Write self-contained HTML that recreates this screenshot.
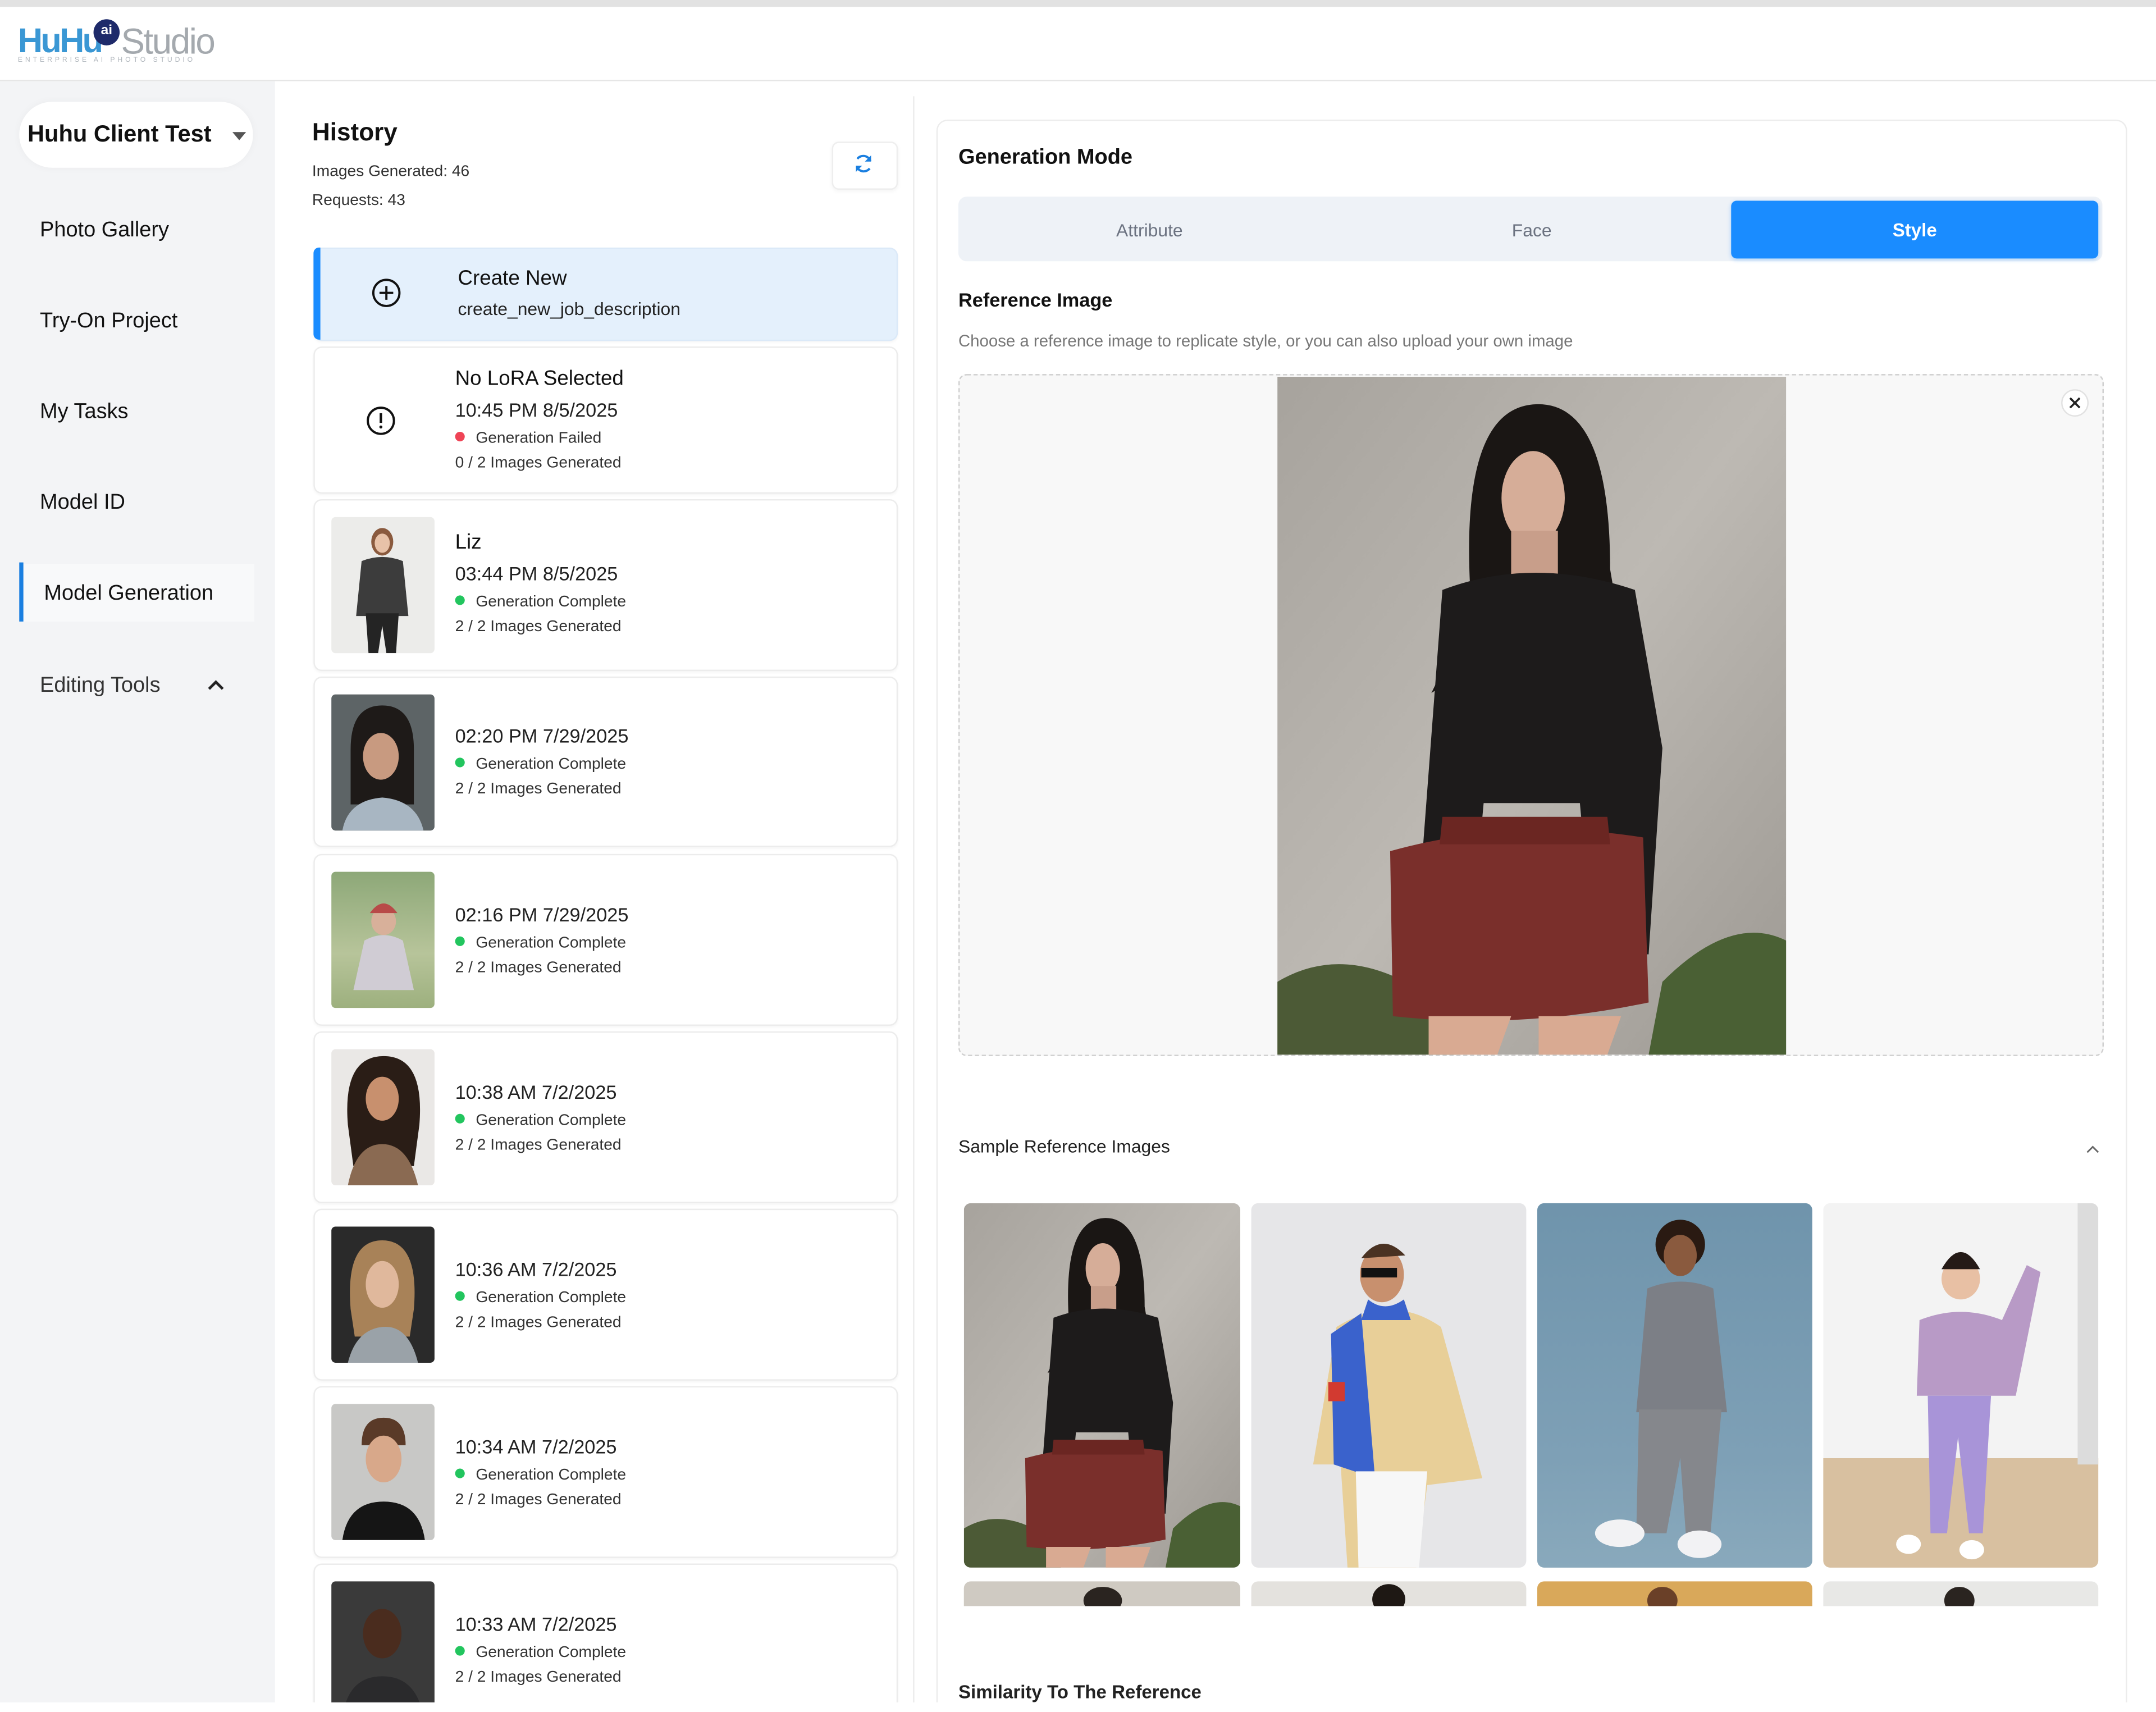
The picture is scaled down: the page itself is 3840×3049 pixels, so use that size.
<!DOCTYPE html>
<html><head><meta charset="utf-8"><style>
html,body{margin:0;padding:0;}
body{width:3840px;height:3048px;overflow:hidden;background:#fff;font-family:"Liberation Sans",Arial,sans-serif;}
#w{position:absolute;left:0;top:0;width:1568px;height:1245px;transform:scale(2.449);transform-origin:0 0;background:#fff;overflow:hidden;}
.a{position:absolute;}
.nav{position:absolute;left:29px;font-size:15.5px;color:#111;}
.card{position:absolute;left:228px;width:423px;background:#fff;border:1px solid #ececec;border-radius:6px;box-shadow:0 1px 2px rgba(0,0,0,.04);}
.th{position:absolute;left:12px;top:12px;width:75px;height:99px;border-radius:3px;overflow:hidden;}
.t1{position:absolute;left:102px;font-size:15px;color:#111;}
.t2{position:absolute;left:102px;font-size:14px;color:#222;}
.st{position:absolute;left:102px;font-size:11.5px;color:#333;}
.st i{display:inline-block;width:7px;height:7px;border-radius:50%;background:#22c55e;margin-right:8px;vertical-align:1px;}
.ct{position:absolute;left:102px;font-size:11.5px;color:#333;}
.g{position:absolute;top:875px;width:200px;height:265px;border-radius:5px;overflow:hidden;}
.g2{position:absolute;top:1150px;width:200px;height:18px;border-radius:5px 5px 0 0;overflow:hidden;}
</style></head><body><div id="w">
<!-- header -->
<div class="a" style="left:0;top:0;width:1568px;height:5px;background:#e2e2e2"></div>
<div class="a" style="left:0;top:58px;width:1568px;height:1px;background:#e6e6e6"></div>
<div class="a" style="left:13px;top:16px;font-size:25px;letter-spacing:-1.5px;color:#3a97d4;font-weight:bold;">HuHu</div>
<div class="a" style="left:68px;top:14px;width:19px;height:19px;border-radius:50%;background:#1e2a6a;color:#fff;font-size:10px;text-align:center;line-height:17px;font-weight:bold">ai</div>
<div class="a" style="left:88px;top:15px;font-size:26px;letter-spacing:-1px;color:#a4a9ae;">Studio</div>
<div class="a" style="left:13px;top:41px;font-size:5px;letter-spacing:2px;color:#b0b6bc;">ENTERPRISE AI PHOTO STUDIO</div>
<!-- sidebar -->
<div class="a" style="left:0;top:59px;width:200px;height:1186px;background:#f3f4f6"></div>
<div class="a" style="left:14px;top:74px;width:170px;height:48px;border-radius:24px;background:#fff;box-shadow:0 0 6px rgba(0,0,0,.04)"></div>
<div class="a" style="left:20px;top:88px;font-size:17px;font-weight:bold;color:#111">Huhu Client Test</div>
<svg class="a" style="left:169px;top:96px" width="10" height="6"><path d="M0 0h10L5 6z" fill="#555"/></svg>
<div class="nav" style="top:159px">Photo Gallery</div>
<div class="nav" style="top:225px">Try-On Project</div>
<div class="nav" style="top:291px">My Tasks</div>
<div class="nav" style="top:357px">Model ID</div>
<div class="a" style="left:17px;top:410px;width:168px;height:42px;background:#f8f9fa"></div>
<div class="a" style="left:14px;top:409px;width:3px;height:43px;background:#1a7fe0"></div>
<div class="nav" style="top:423px;left:32px">Model Generation</div>
<div class="nav" style="top:490px;color:#333">Editing Tools</div>
<svg class="a" style="left:151px;top:494px" width="12" height="8"><path d="M1 7L6 2L11 7" stroke="#222" stroke-width="2" fill="none"/></svg>
<!-- middle -->
<div class="a" style="left:664px;top:70px;width:1px;height:1175px;background:#ececec"></div>
<div class="a" style="left:227px;top:86px;font-size:18px;font-weight:bold;color:#111">History</div>
<div class="a" style="left:227px;top:119px;font-size:11.5px;color:#333">Images Generated: 46</div>
<div class="a" style="left:227px;top:140px;font-size:11.5px;color:#333">Requests: 43</div>
<div class="a" style="left:605px;top:103px;width:46px;height:33px;border:1px solid #eee;border-radius:5px;background:#fff;box-shadow:0 1px 3px rgba(0,0,0,.05)"></div>
<svg class="a" style="left:620px;top:111px" width="16" height="16" viewBox="0 0 16 16"><path d="M13 6A5.5 5.5 0 0 0 3.5 4.5M3 10a5.5 5.5 0 0 0 9.5 1.5" stroke="#1a7fe0" stroke-width="1.6" fill="none"/><path d="M13.5 2v4.5H9z" fill="#1a7fe0"/><path d="M2.5 14V9.5H7z" fill="#1a7fe0"/></svg>

<div class="card" style="top:180px;height:66px;background:#e4f0fc;border-color:#dbe9f8"></div>
<div class="a" style="left:228px;top:180px;width:5px;height:67px;background:#1a8cff;border-radius:4px 0 0 4px"></div>
<svg class="a" style="left:270px;top:202px" width="22" height="22"><circle cx="11" cy="11" r="9.5" stroke="#111" stroke-width="1.6" fill="none"/><path d="M11 6v10M6 11h10" stroke="#111" stroke-width="1.6"/></svg>
<div class="a" style="left:333px;top:194px;font-size:15px;color:#111">Create New</div>
<div class="a" style="left:333px;top:217px;font-size:13px;color:#222">create_new_job_description</div>

<div class="card" style="top:252px;height:105px">
<svg class="a" style="left:37px;top:42px" width="22" height="22"><circle cx="11" cy="11" r="9.5" stroke="#111" stroke-width="1.6" fill="none"/><path d="M11 5.5v7" stroke="#111" stroke-width="1.8"/><circle cx="11" cy="15.5" r="1.1" fill="#111"/></svg>
<div class="t1" style="top:14px">No LoRA Selected</div>
<div class="t2" style="top:37px">10:45 PM 8/5/2025</div>
<div class="st" style="top:60px"><i style="background:#ef4456"></i>Generation Failed</div>
<div class="ct" style="top:78px">0 / 2 Images Generated</div>
</div>

<div class="card" style="top:363px;height:123px">
<div class="th" style="background:#ececea"><svg width="75" height="99" viewBox="0 0 75 99"><ellipse cx="37" cy="18" rx="8" ry="10" fill="#8a5a3e"/><ellipse cx="37" cy="19" rx="5.5" ry="7" fill="#e8c2a8"/><path d="M22 32q15-6 30 0l4 40h-38z" fill="#3c3c3c"/><path d="M25 70h24l-2 29h-7l-3-20-3 20h-7z" fill="#242424"/></svg></div>
<div class="t1" style="top:22px">Liz</div>
<div class="t2" style="top:45px">03:44 PM 8/5/2025</div>
<div class="st" style="top:68px"><i></i>Generation Complete</div>
<div class="ct" style="top:86px">2 / 2 Images Generated</div>
</div>

<div class="card" style="top:492px;height:122px">
<div class="th" style="background:#5d6466"><svg width="75" height="99" viewBox="0 0 75 99"><path d="M14 40q0-32 23-32t23 32v40h-46z" fill="#1e1a18"/><ellipse cx="36" cy="45" rx="13" ry="17" fill="#c89a80"/><path d="M8 99q4-22 29-24q25 2 30 24z" fill="#a8b6c2"/></svg></div>
<div class="t2" style="top:34px">02:20 PM 7/29/2025</div>
<div class="st" style="top:57px"><i></i>Generation Complete</div>
<div class="ct" style="top:75px">2 / 2 Images Generated</div>
</div>

<div class="card" style="top:621px;height:123px">
<div class="th" style="background:linear-gradient(#8da878,#b7c49a 60%,#9db07e)"><svg width="75" height="99" viewBox="0 0 75 99"><ellipse cx="38" cy="36" rx="9" ry="10" fill="#d8b09a"/><path d="M28 30q10-14 20 0" fill="#b84a48"/><path d="M24 50q14-8 28 0l8 36h-44z" fill="#d0ccd4"/></svg></div>
<div class="t2" style="top:35px">02:16 PM 7/29/2025</div>
<div class="st" style="top:58px"><i></i>Generation Complete</div>
<div class="ct" style="top:76px">2 / 2 Images Generated</div>
</div>

<div class="card" style="top:750px;height:123px">
<div class="th" style="background:#eae8e6"><svg width="75" height="99" viewBox="0 0 75 99"><path d="M12 55q-4-50 26-50t26 50l-4 30h-44z" fill="#2a1d16"/><ellipse cx="37" cy="36" rx="12" ry="16" fill="#c8906e"/><path d="M12 99q6-30 25-30t26 30z" fill="#8a6a52"/></svg></div>
<div class="t2" style="top:35px">10:38 AM 7/2/2025</div>
<div class="st" style="top:58px"><i></i>Generation Complete</div>
<div class="ct" style="top:76px">2 / 2 Images Generated</div>
</div>

<div class="card" style="top:879px;height:123px">
<div class="th" style="background:#2a2a2a"><svg width="75" height="99" viewBox="0 0 75 99"><path d="M14 60q-4-50 23-50t23 50l-3 20h-40z" fill="#a88258"/><ellipse cx="37" cy="42" rx="12" ry="17" fill="#e0b89c"/><path d="M12 99q6-24 25-26t26 26z" fill="#9aa2a8"/></svg></div>
<div class="t2" style="top:35px">10:36 AM 7/2/2025</div>
<div class="st" style="top:58px"><i></i>Generation Complete</div>
<div class="ct" style="top:76px">2 / 2 Images Generated</div>
</div>

<div class="card" style="top:1008px;height:123px">
<div class="th" style="background:#c8c8c6"><svg width="75" height="99" viewBox="0 0 75 99"><path d="M22 30q0-20 16-20t16 20z" fill="#5a3a28"/><ellipse cx="38" cy="40" rx="13" ry="17" fill="#d8a88a"/><path d="M8 99q4-28 30-28t30 28z" fill="#151515"/></svg></div>
<div class="t2" style="top:35px">10:34 AM 7/2/2025</div>
<div class="st" style="top:58px"><i></i>Generation Complete</div>
<div class="ct" style="top:76px">2 / 2 Images Generated</div>
</div>

<div class="card" style="top:1137px;height:120px">
<div class="th" style="background:#3a3a3a"><svg width="75" height="99" viewBox="0 0 75 99"><ellipse cx="37" cy="38" rx="14" ry="18" fill="#4a2c1e"/><path d="M8 99q4-30 29-30t30 30z" fill="#2a2a2c"/></svg></div>
<div class="t2" style="top:35px">10:33 AM 7/2/2025</div>
<div class="st" style="top:58px"><i></i>Generation Complete</div>
<div class="ct" style="top:76px">2 / 2 Images Generated</div>
</div>

<!-- right panel -->
<div class="a" style="left:681px;top:87px;width:864px;height:1170px;border:1px solid #ececec;border-radius:8px;background:#fff"></div>
<div class="a" style="left:697px;top:106px;font-size:15.5px;font-weight:bold;color:#111">Generation Mode</div>
<div class="a" style="left:697px;top:143px;width:832px;height:47px;background:#eef2f7;border-radius:6px"></div>
<div class="a" style="left:1259px;top:146px;width:267px;height:42px;background:#1a8cff;border-radius:4px;box-shadow:0 1px 3px rgba(26,140,255,.3)"></div>
<div class="a" style="left:697px;top:160px;width:278px;text-align:center;font-size:13px;color:#6b7280">Attribute</div>
<div class="a" style="left:975px;top:160px;width:278px;text-align:center;font-size:13px;color:#6b7280">Face</div>
<div class="a" style="left:1259px;top:160px;width:267px;text-align:center;font-size:13.5px;color:#fff;font-weight:bold">Style</div>
<div class="a" style="left:697px;top:210px;font-size:14px;font-weight:bold;color:#111">Reference Image</div>
<div class="a" style="left:697px;top:241px;font-size:12px;color:#777">Choose a reference image to replicate style, or you can also upload your own image</div>
<div class="a" style="left:697px;top:272px;width:831px;height:494px;border:1.5px dashed #cfcfcf;border-radius:6px;background:#f8f8f8"></div>

<svg class="a" style="left:929px;top:274px" width="370" height="493" viewBox="0 0 370 493" preserveAspectRatio="none">
<defs><linearGradient id="wall" x1="0" y1="0" x2="1" y2="1"><stop offset="0" stop-color="#a7a39d"/><stop offset=".5" stop-color="#bdb9b3"/><stop offset="1" stop-color="#9d9993"/></linearGradient>
<g id="wm">
<path d="M0 440q50-30 110 10l20 43H0z" fill="#4c5a36"/>
<path d="M280 440q50-50 90-30v83H270z" fill="#4a6034"/>
<path d="M140 150q-6-128 48-130t54 120q10 60 20 90l-40 -20-80 0-30 20q20-40 28-80z" fill="#1a1614"/>
<ellipse cx="186" cy="88" rx="23" ry="34" fill="#d6ad98"/>
<path d="M170 112h34v32h-34z" fill="#c89e8a"/>
<path d="M120 155q66-25 140 0l20 115 -10 150-40 0-10-110h-70l-10 110-40 0z" fill="#1d1b1b"/>
<path d="M82 345q90-25 184-10l4 120q-95 20-186 10z" fill="#7a2f2b"/>
<path d="M110 465h60l-10 28h-50zM190 465h60l-10 28h-50z" fill="#d9aa92"/>
<path d="M120 320h120l2 20h-124z" fill="#6b2622"/>
</g></defs>
<rect width="370" height="493" fill="url(#wall)"/>
<use href="#wm"/>
</svg>

<svg class="a" style="left:1499px;top:283px" width="20" height="20"><circle cx="10" cy="10" r="9.5" fill="#fff" stroke="#e2e2e2"/><path d="M6.5 6.5l7 7M13.5 6.5l-7 7" stroke="#222" stroke-width="1.5"/></svg>

<div class="a" style="left:697px;top:826px;font-size:13px;color:#222">Sample Reference Images</div>
<svg class="a" style="left:1517px;top:832px" width="10" height="7"><path d="M1 6L5 2L9 6" stroke="#666" stroke-width="1.2" fill="none"/></svg>

<div class="g" style="left:701px;width:201px">
<svg width="201" height="265" viewBox="0 0 370 493" preserveAspectRatio="none">
<rect width="370" height="493" fill="url(#wall)"/>
<use href="#wm"/>
</svg></div>
<div class="g" style="left:910px;background:#e6e6e8">
<svg width="200" height="265" viewBox="0 0 200 265"><ellipse cx="95" cy="52" rx="16" ry="20" fill="#c8906e"/><path d="M80 40q15-20 32-2" fill="#4a3222"/><rect x="80" y="47" width="26" height="7" fill="#111"/><path d="M62 90q40-25 76 0l30 110-40 5-8 60h-50l-5-75-20 0z" fill="#e8cf98"/><path d="M58 95l22-15 10 120-30-10z" fill="#3a62cc"/><path d="M56 130h12v14h-12z" fill="#d23a30"/><path d="M85 70q12 10 26 0l5 15h-36z" fill="#3a62cc"/><path d="M76 195h52l-6 70h-44z" fill="#f7f7f7"/></svg></div>
<div class="g" style="left:1118px;background:linear-gradient(#6f94ac,#7ea0b6 70%,#89a9bc)">
<svg width="200" height="265" viewBox="0 0 200 265"><ellipse cx="104" cy="30" rx="18" ry="18" fill="#2a1a12"/><ellipse cx="104" cy="38" rx="12" ry="15" fill="#8a5a3e"/><path d="M80 62q25-10 48 0l10 90h-66z" fill="#7c7f86"/><path d="M74 150h60l-8 90h-18l-4-55-10 55h-22z" fill="#85878c"/><ellipse cx="60" cy="240" rx="18" ry="10" fill="#f2f2f4"/><ellipse cx="118" cy="248" rx="16" ry="10" fill="#f2f2f4"/></svg></div>
<div class="g" style="left:1326px;background:linear-gradient(#f3f3f3 0,#f3f3f3 70%,#d8c0a0 70%)">
<svg width="200" height="265" viewBox="0 0 200 265"><rect x="185" y="0" width="15" height="190" fill="#dcdcdc"/><ellipse cx="100" cy="55" rx="14" ry="15" fill="#e8c0a4"/><path d="M86 48q14-25 28 0" fill="#241a16"/><path d="M70 85q30-12 60 0l18-40 10 5-18 90h-72z" fill="#b89ac6"/><path d="M76 140h46l-6 100h-10l-8-70-8 70h-12z" fill="#a894d8"/><ellipse cx="62" cy="248" rx="9" ry="7" fill="#fff"/><ellipse cx="108" cy="252" rx="9" ry="7" fill="#fff"/></svg></div>
<div class="g2" style="left:701px;width:201px;background:#cfcac2"><div style="margin:4px auto 0;width:28px;height:20px;border-radius:50%;background:#2a2420"></div></div>
<div class="g2" style="left:910px;background:#e4e2de"><div style="margin:2px auto 0;width:24px;height:22px;border-radius:50%;background:#1e1814"></div></div>
<div class="g2" style="left:1118px;background:#d9a85a"><div style="margin:4px 0 0 80px;width:22px;height:20px;border-radius:50%;background:#6a4028"></div></div>
<div class="g2" style="left:1326px;background:#e8e8e6"><div style="margin:4px 0 0 88px;width:22px;height:20px;border-radius:50%;background:#2a2420"></div></div>
<div class="a" style="left:697px;top:1223px;font-size:13.5px;font-weight:bold;color:#222">Similarity To The Reference</div>
<div class="a" style="left:0;top:1238px;width:1568px;height:7px;background:#fff"></div>
</div></body></html>
